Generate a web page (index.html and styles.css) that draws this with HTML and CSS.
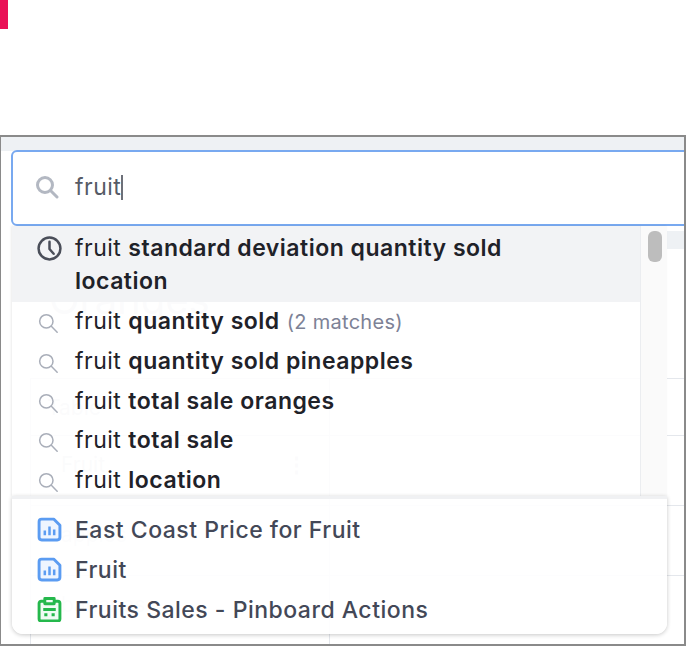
FILE: index.html
```html
<!DOCTYPE html>
<html lang="en">
<head>
<meta charset="utf-8">
<title>Search</title>
<link rel="stylesheet" href="styles.css">
</head>
<body>
<div class="accent"></div>
<main class="frame">
  <div class="ghost" aria-hidden="true">
    <div class="ghost-head"></div>
    <div class="ghost-title">Oranges</div>
    <div class="ghost-row ghost-row-label">Table</div>
    <div class="ghost-row">Fruit<span class="ghost-dots">⋮</span></div>
    <div class="ghost-row">apples</div>
    <div class="ghost-row">bananas</div>
  </div>
  <div class="search">
    <svg class="search-icon" viewBox="0 0 24 24"><circle cx="10" cy="10" r="7.500"/><path d="M15.500 15.500 22 22"/></svg>
    <span class="query">fruit</span><span class="caret"></span>
  </div>
  <div class="dropdown">
    <div class="suggestions">
      <ul class="list">
        <li class="item item-active">
          <svg class="clock" viewBox="0 0 24 24"><circle cx="12" cy="12" r="10.500"/><path d="M12 5.500V12.500L16 17"/></svg>
          <span class="text">fruit <b>standard deviation quantity sold location</b></span>
        </li>
        <li class="item"><svg class="mag" viewBox="0 0 24 24"><circle cx="10" cy="10" r="8"/><path d="M16 16 23 23"/></svg><span class="text">fruit <b>quantity sold</b> <em>(2 matches)</em></span></li>
        <li class="item"><svg class="mag" viewBox="0 0 24 24"><circle cx="10" cy="10" r="8"/><path d="M16 16 23 23"/></svg><span class="text">fruit <b>quantity sold pineapples</b></span></li>
        <li class="item"><svg class="mag" viewBox="0 0 24 24"><circle cx="10" cy="10" r="8"/><path d="M16 16 23 23"/></svg><span class="text">fruit <b>total sale oranges</b></span></li>
        <li class="item"><svg class="mag" viewBox="0 0 24 24"><circle cx="10" cy="10" r="8"/><path d="M16 16 23 23"/></svg><span class="text">fruit <b>total sale</b></span></li>
        <li class="item"><svg class="mag" viewBox="0 0 24 24"><circle cx="10" cy="10" r="8"/><path d="M16 16 23 23"/></svg><span class="text">fruit <b>location</b></span></li>
      </ul>
      <div class="track"><div class="thumb"></div></div>
    </div>
    <ul class="results">
      <li class="item result"><svg class="doc blue" viewBox="0 0 24 24"><path d="M2 4.500a2.500 2.500 0 0 1 2.500-2.500H16l6 6v11.500a2.500 2.500 0 0 1-2.500 2.500h-15A2.500 2.500 0 0 1 2 19.500z"/><path class="bars" d="M7.500 13v4.500M12 9v8.500M16.500 12v5.500"/></svg><span class="text">East Coast Price for Fruit</span></li>
      <li class="item result"><svg class="doc blue" viewBox="0 0 24 24"><path d="M2 4.500a2.500 2.500 0 0 1 2.500-2.500H16l6 6v11.500a2.500 2.500 0 0 1-2.500 2.500h-15A2.500 2.500 0 0 1 2 19.500z"/><path class="bars" d="M7.500 13v4.500M12 9v8.500M16.500 12v5.500"/></svg><span class="text">Fruit</span></li>
      <li class="item result"><svg class="doc green" viewBox="0 0 24 24"><path d="M2 6a2 2 0 0 1 2-2h16a2 2 0 0 1 2 2v15a2 2 0 0 1-2 2H4a2 2 0 0 1-2-2z"/><path d="M7.500 1.500h9v5h-9zM6 12h12M7 17h3M14 17h3"/></svg><span class="text">Fruits Sales - Pinboard Actions</span></li>
    </ul>
  </div>
</main>
</body>
</html>
```

FILE: styles.css
```css
* { box-sizing: border-box; }
html, body { margin: 0; padding: 0; }
body {
  width: 686px;
  height: 647px;
  overflow: hidden;
  background: #fff;
  font-family: Inter, "Liberation Sans", sans-serif;
  color: #1f2229;
}
.accent { width: 8px; height: 29px; background: #ea1157; }
.frame {
  position: relative;
  margin-top: 106px;
  height: 511px;
  width: 686px;
  border: 1px solid #8a8a8a;
  border-width: 2px 2px 2px 1px;
  background: #fff;
  padding: 13px 0 0 11px;
  overflow: hidden;
}
.frame::before {
  content: "";
  position: absolute;
  left: 0; right: 0; top: 0;
  height: 14px;
  background: #eef1f4;
}
.search {
  position: relative;
  display: flex;
  align-items: center;
  height: 76px;
  width: 690px;
  margin-left: -1px;
  border: 2px solid #78a9f0;
  border-radius: 6px;
  background: #fff;
  padding: 0 0 2px 22px;
}
.search-icon { width: 24px; height: 24px; margin-top: -1px; flex: none; fill: none; stroke: #b3b8c2; stroke-width: 3; stroke-linecap: round; }
.query { margin-left: 16px; font-size: 23px; letter-spacing: .5px; color: #565b66; }
.caret { width: 2px; height: 25px; background: #6d7079; }
.dropdown { position: relative; width: 655px; }
.suggestions {
  position: relative;
  display: flex;
  height: 270px;
  overflow: hidden;
  background: rgba(255,255,255,.88);
  box-shadow: -1px 0 2px rgba(0,0,0,.08);
}
.list { list-style: none; margin: 0; padding: 0; flex: 1; min-width: 0; }
.track { width: 27px; border-left: 1px solid #ebedf0; background: rgba(250,250,250,.9); padding: 5px 0 0 7px; }
.thumb { width: 14px; height: 31px; border-radius: 6px; background: #bdbdbd; }
.item { display: flex; align-items: flex-start; padding: 3px 0 0 25px; height: 39.8px; font-size: 23px; line-height: 33px; letter-spacing: .5px; }
.item-active { background: #f2f3f5; height: 76px; padding-top: 6px; }
.text { margin-left: 14px; max-width: 500px; font-weight: 400; }
.text b { font-weight: 600; }
.text em { font-style: normal; font-size: 20px; letter-spacing: .3px; color: #7d8296; }
.clock { width: 25px; height: 25px; margin-top: 4px; flex: none; fill: none; stroke: #4a4e59; stroke-width: 2.400; stroke-linecap: round; stroke-linejoin: round; margin-right: -1px; }
.mag { width: 20px; height: 20px; margin: 8px 3px 0 1px; flex: none; fill: none; stroke: #a9aeb9; stroke-width: 1.800; stroke-linecap: round; }
.results {
  position: relative;
  list-style: none;
  margin: 0;
  padding: 12px 0 0;
  height: 138px;
  background: rgba(255,255,255,.92);
  border-top: 3px solid #f0f1f3;
  border-radius: 0 0 11px 11px;
  box-shadow: 0 1px 4px rgba(0,0,0,.22);
}
.result { color: #434857; padding-top: 3px; padding-left: 25px; }
.result .text { font-weight: 500; margin-left: 13px; }
.doc { width: 25px; height: 25px; margin-top: 3px; flex: none; fill: #eef5ff; stroke-width: 2.800; stroke-linejoin: round; }
.blue { stroke: #5b9cf2; }
.green { stroke: #25b84c; fill: #f0fbf4; }
.bars { stroke-width: 2.400; fill: none; }
.ghost { position: absolute; left: 0; right: 0; top: 94px; color: #d9dbe0; font-size: 21px; }
.ghost-head { height: 18px; margin-left: 640px; background: #eef1f4; }
.ghost-title { padding-left: 48px; font-size: 40px; line-height: 50px; height: 103px; margin-top: 26px; }
.ghost-row { position: relative; height: 70px; margin-left: 29px; padding: 16px 0 0 30px; border-top: 1px solid #e4e7ec; border-left: 1px solid #e4e7ec; width: 657px; }
.ghost-row::after { content: ""; position: absolute; left: 298px; top: 0; bottom: 0; width: 1px; background: #e4e7ec; }
.ghost-row-label { padding-left: 16px; height: 57px; }
.ghost-dots { position: absolute; left: 255px; top: 16px; font-weight: 700; }
```
